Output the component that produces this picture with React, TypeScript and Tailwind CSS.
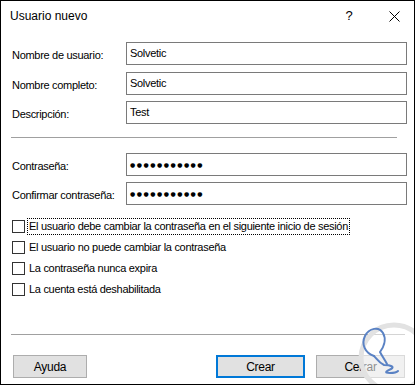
import React from "react"

const fields = [
  { label: "Nombre de usuario:", value: "Solvetic" },
  { label: "Nombre completo:", value: "Solvetic" },
  { label: "Descripción:", value: "Test" },
]

const passwords = ["Contraseña:", "Confirmar contraseña:"]

const options = [
  "El usuario debe cambiar la contraseña en el siguiente inicio de sesión",
  "El usuario no puede cambiar la contraseña",
  "La contraseña nunca expira",
  "La cuenta está deshabilitada",
]

function Field({ label, children, className = "" }: { label: string; children: React.ReactNode; className?: string }) {
  return (
    <div className={"flex items-center " + className}>
      <div className="w-[114px] pt-[3px]">{label}</div>
      <div className="w-[281px] h-[23px] border border-[#7a7a7a] bg-white flex items-start pl-[3px] pt-[2px]">
        {children}
      </div>
    </div>
  )
}

function Watermark() {
  return (
    <svg
      className="absolute left-[352px] top-[315px] pointer-events-none"
      width="90"
      height="90"
      viewBox="352 315 90 90"
    >
      <circle cx="393" cy="357" r="33" fill="rgba(255,255,255,0.55)" stroke="#e2e2e2" strokeWidth="5" />
      <path
        d="M373 355 C364 352 360 343 364 335 C368 327 378 325 382 332 C386 339 382 347 379 351 C381 355 384 359 386 363"
        fill="none"
        stroke="#5a82c4"
        strokeWidth="2"
        strokeLinecap="round"
      />
      <path
        d="M373 355 C376 358 378 362 383 364 C390 364 394 366 390 368 C386 370 382 372 389 372 C393 372 396 371 397 370"
        fill="none"
        stroke="#5a82c4"
        strokeWidth="2"
        strokeLinecap="round"
      />
    </svg>
  )
}

export default function App() {
  return (
    <div
      className="relative w-[415px] h-[385px] border border-black bg-white text-[11px] tracking-[-0.3px] text-black overflow-hidden"
      style={{ fontFamily: '"Liberation Sans", Arial, sans-serif' }}
    >
      {/* title bar */}
      <div className="h-[30px] flex items-center">
        <div className="pl-[9px] text-[12px] tracking-normal flex-1">Usuario nuevo</div>
        <div className="w-[20px] text-[13px] text-center mr-[30px]">?</div>
        <svg width="11" height="11" viewBox="0 0 11 11" className="mr-[14px]">
          <path d="M0.5 0.5 L10.5 10.5 M10.5 0.5 L0.5 10.5" stroke="#000" strokeWidth="1" />
        </svg>
      </div>

      <div className="pl-[11px] pt-[11px] flex flex-col">
        {fields.map((f, i) => (
          <Field key={f.label} label={f.label} className={i === 0 ? "" : i === 1 ? "mt-[7px]" : "mt-[6px]"}>
            {f.value}
          </Field>
        ))}
      </div>

      <div className="ml-[10px] mt-[13px] w-[386px] h-px bg-[#a0a0a0]" />

      <div className="pl-[11px] pt-[15px] flex flex-col gap-[6px]">
        {passwords.map((p) => (
          <Field key={p} label={p}>
            <span className="text-[6px] tracking-[1.5px] leading-[17px]" style={{ fontFamily: '"DejaVu Sans", sans-serif' }}>
              ●●●●●●●●●●●
            </span>
          </Field>
        ))}
      </div>

      <div className="pl-[11px] pt-[15px] flex flex-col gap-[8px]">
        {options.map((o, i) => (
          <div key={o} className="flex items-center h-[13px]">
            <div className="w-[13px] h-[13px] border border-[#333] bg-white shrink-0" />
            <div
              className={
                "ml-[2px] px-[1px] leading-[15px] " +
                (i === 0 ? "border border-dotted border-black" : "border border-transparent")
              }
            >
              {o}
            </div>
          </div>
        ))}
      </div>

      <div className="ml-[10px] mt-[38px] w-[394px] h-px bg-[#a0a0a0]" />

      <div className="flex items-center mt-[20px] pl-[12px] pr-[9px]">
        <button className="w-[74px] h-[23px] bg-[#e1e1e1] border border-[#adadad] text-[12px]">Ayuda</button>
        <div className="flex-1" />
        <button className="w-[89px] h-[23px] bg-[#e1e1e1] border-2 border-[#0078d7] text-[12px]">Crear</button>
        <button className="ml-[11px] w-[89px] h-[23px] bg-[#e1e1e1] border border-[#adadad] text-[12px]">Cerrar</button>
      </div>

      <Watermark />
    </div>
  )
}
